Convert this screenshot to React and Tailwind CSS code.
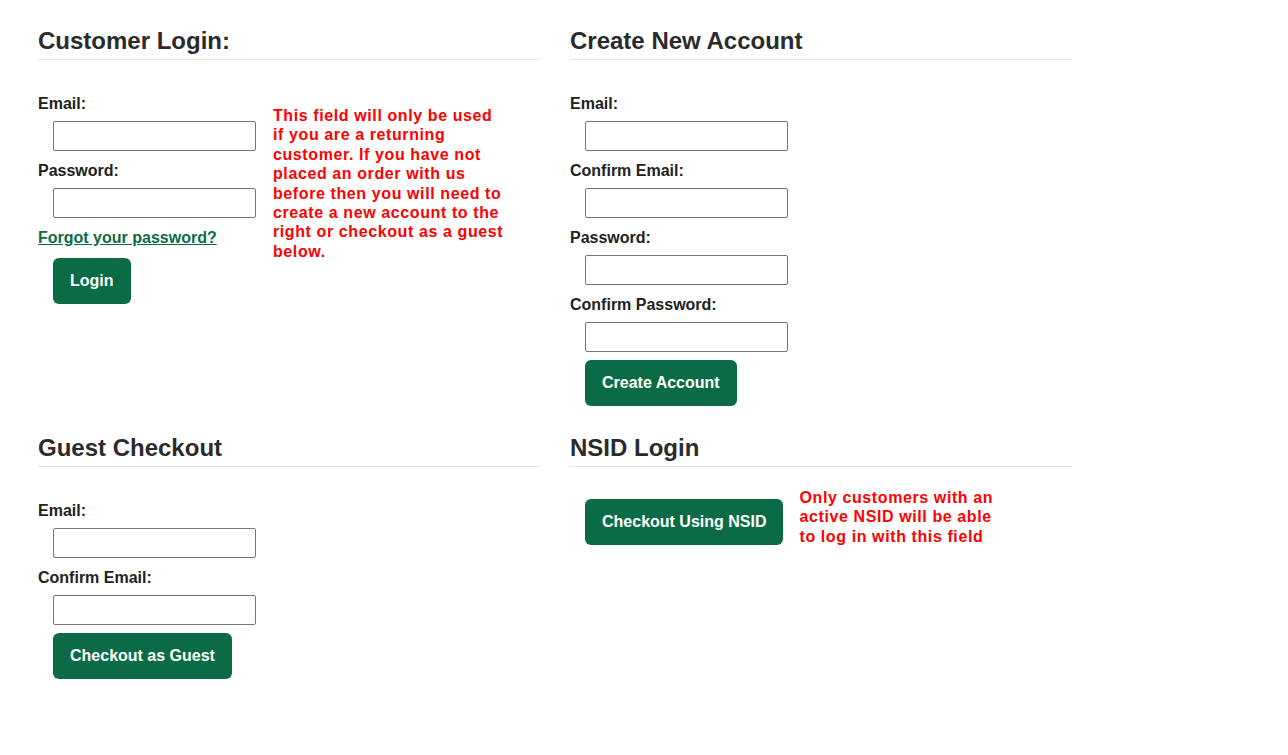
import React from 'react';

const font = { fontFamily: '"Liberation Sans", Arial, sans-serif' };

function Heading({ children }) {
    return (
        <h2 className="mt-[27px] pb-[4px] text-[24px] leading-[28px] font-bold text-[#2b2b2b] border-b border-[#e5e5e5]">
            {children}
        </h2>
    );
}

function Field({ label, type = 'text' }) {
    return (
        <div className="mb-[10px]">
            <label className="block text-[16px] leading-[20px] font-bold text-[#222]">{label}</label>
            <input type={type}
                className="block mt-[7px] ml-[15px] w-[203px] h-[30px] border border-[#767676] rounded-[2px] bg-white px-2 text-sm outline-none" />
        </div>
    );
}

function GreenButton({ children, className = '' }) {
    return (
        <button type="button"
            className={`h-[46px] px-[17px] rounded-[6px] bg-[#0b6b47] text-white text-[16px] font-bold ${className}`}>
            {children}
        </button>
    );
}

export default function App() {
    return (
        <div className="bg-white min-h-[755px] pl-[38px]" style={font}>
            <div className="grid grid-cols-[502px_502px] gap-x-[30px] gap-y-px">
                {/* Customer login */}
                <section>
                    <Heading>Customer Login:</Heading>
                    <div className="flex">
                        <div className="w-[235px] pt-[34px]">
                            <Field label="Email:" type="email" />
                            <Field label="Password:" type="password" />
                            <a href="#" className="block text-[16px] leading-[20px] font-bold text-[#0b6b47] underline">
                                Forgot your password?
                            </a>
                            <GreenButton className="mt-[10px] ml-[15px]">Login</GreenButton>
                        </div>
                        <p className="w-[232px] pt-[46px] text-[16px] leading-[19.4px] tracking-[0.6px] font-bold text-[#ff0000]">
                            This field will only be used if you are a returning customer. If you have not placed an order with us before then you will need to create a new account to the right or checkout as a guest below.
                        </p>
                    </div>
                </section>

                {/* Create account */}
                <section>
                    <Heading>Create New Account</Heading>
                    <div className="pt-[34px]">
                        <Field label="Email:" type="email" />
                        <Field label="Confirm Email:" type="email" />
                        <Field label="Password:" type="password" />
                        <Field label="Confirm Password:" type="password" />
                        <GreenButton className="-mt-[2px] ml-[15px]">Create Account</GreenButton>
                    </div>
                </section>

                {/* Guest checkout */}
                <section>
                    <Heading>Guest Checkout</Heading>
                    <div className="pt-[34px]">
                        <Field label="Email:" type="email" />
                        <Field label="Confirm Email:" type="email" />
                        <GreenButton className="-mt-[2px] ml-[15px]">Checkout as Guest</GreenButton>
                    </div>
                </section>

                {/* NSID login */}
                <section>
                    <Heading>NSID Login</Heading>
                    <div className="flex items-start pt-[21px]">
                        <GreenButton className="mt-[11px] ml-[15px]">Checkout Using NSID</GreenButton>
                        <p className="ml-[16px] w-[205px] text-[16px] leading-[19.4px] tracking-[0.6px] font-bold text-[#ff0000]">
                            Only customers with an active NSID will be able to log in with this field
                        </p>
                    </div>
                </section>
            </div>
        </div>
    );
}
